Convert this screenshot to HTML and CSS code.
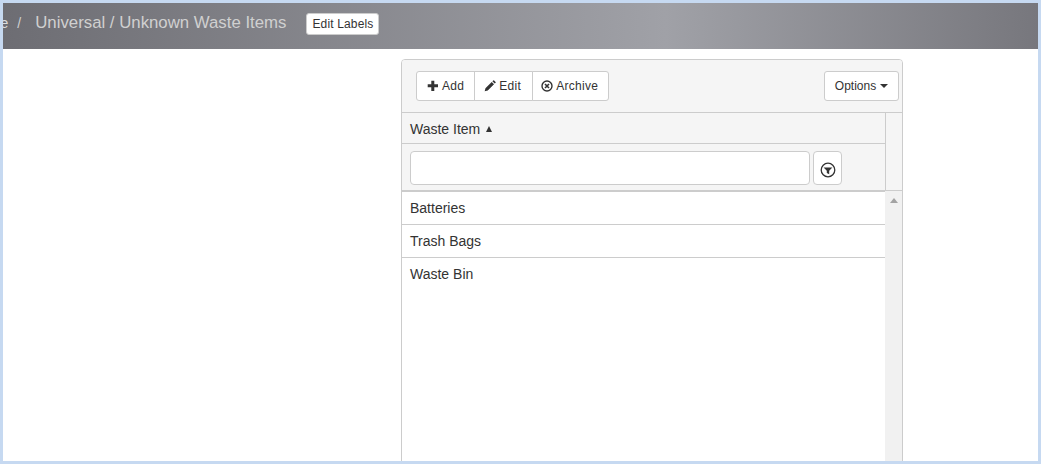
FILE: index.html
```html
<!DOCTYPE html>
<html lang="en">
<head>
<meta charset="utf-8">
<title>Universal / Unknown Waste Items</title>
<link rel="stylesheet" href="styles.css">
</head>
<body>
<div class="frame">
  <header class="topbar">
    <span class="crumb-home">Home</span>
    <span class="crumb-sep">/</span>
    <span class="crumb-title">Universal / Unknown Waste Items</span>
    <button class="edit-labels">Edit Labels</button>
  </header>
  <main class="content">
    <section class="panel">
      <div class="toolbar">
        <div class="btn-group">
          <button class="btn">
            <svg class="icon" width="12" height="12" viewBox="0 0 12 12"><path d="M4.3 0.7h3v3.6h3.7v3h-3.7v3.7h-3v-3.7h-3.6v-3h3.6z" fill="#333"/></svg>
            Add
          </button>
          <button class="btn btn-edit">
            <svg class="icon" width="12" height="12" viewBox="0 0 14 14"><path d="M0.8 13.2l0.9-3.6 7.3-7.3 2.7 2.7-7.3 7.3zM9.8 1.5l1-1a0.7 0.7 0 0 1 1 0l1.7 1.7a0.7 0.7 0 0 1 0 1l-1 1z" fill="#333"/></svg>
            Edit
          </button>
          <button class="btn btn-archive">
            <svg class="icon" width="12" height="12" viewBox="0 0 12 12"><circle cx="6" cy="6" r="5" fill="none" stroke="#333" stroke-width="1.4"/><path d="M4 4l4 4M8 4l-4 4" stroke="#333" stroke-width="1.6"/></svg>
            Archive
          </button>
        </div>
        <button class="btn options">Options <span class="caret"></span></button>
      </div>
      <div class="grid-head">
        <div class="head-main">
          <div class="head-title">Waste Item <span class="sort-up"></span></div>
          <div class="head-filter">
            <input class="filter-input" type="text" aria-label="Filter">
            <button class="filter-btn" aria-label="Filter options">
              <svg width="16" height="16" viewBox="0 0 16 16"><circle cx="8" cy="8" r="6.8" fill="none" stroke="#333" stroke-width="1.3"/><path d="M3.6 5.4h8.8l-3.2 3.4v3.4l-2.4-1.2v-2.2z" fill="#333"/></svg>
            </button>
          </div>
        </div>
        <div class="head-gutter"></div>
      </div>
      <div class="grid-body">
        <ul class="rows">
          <li class="row">Batteries</li>
          <li class="row">Trash Bags</li>
          <li class="row">Waste Bin</li>
        </ul>
        <div class="scrollbar"><span class="scroll-up"></span></div>
      </div>
    </section>
  </main>
</div>
</body>
</html>
```
FILE: styles.css
```css
* { box-sizing: border-box; }
html, body { margin: 0; padding: 0; height: 100%; overflow: hidden; background: #fff; }
body { font-family: "Liberation Sans", Arial, sans-serif; font-size: 14px; color: #333; }
button { font-family: inherit; }

.frame {
  width: 1041px;
  height: 464px;
  border: 3px solid #c6d9f1;
  overflow: hidden;
  background: #fff;
}

.topbar {
  height: 46px;
  display: flex;
  align-items: center;
  background: linear-gradient(90deg, #6d6d73 0%, #a0a1a7 64%, #77777d 100%);
  color: #d0d0d0;
  overflow: hidden;
  white-space: nowrap;
}
.crumb-home { font-size: 14px; margin-left: -32px; margin-bottom: 6px; color: #ddd; }
.crumb-sep { font-size: 14px; margin-left: 9px; margin-bottom: 6px; }
.crumb-title { font-size: 16.8px; margin-left: 14px; margin-bottom: 6px; }
.edit-labels {
  margin-left: 20px;
  margin-bottom: 4px;
  height: 22px;
  width: 73px;
  padding: 0;
  font-size: 12px;
  letter-spacing: 0.15px;
  color: #333;
  background: #fff;
  border: 1px solid #ccc;
  border-radius: 3px;
}

.content { padding: 10px 0 0 398px; }

.panel {
  width: 502px;
  height: 420px;
  border: 1px solid #ccc;
  border-radius: 4px 4px 0 0;
  background: #fff;
  overflow: hidden;
}

.toolbar {
  height: 53px;
  padding: 11px 3px 0 14px;
  display: flex;
  justify-content: space-between;
  align-items: flex-start;
  background: #f5f5f5;
  border-bottom: 1px solid #ccc;
}
.btn-group { display: flex; }
.btn {
  height: 30px;
  padding: 0 10px;
  font-size: 12px;
  color: #333;
  background: #fff;
  border: 1px solid #ccc;
  display: inline-flex;
  align-items: center;
  gap: 3px;
}
.btn-group .btn { margin-left: -1px; letter-spacing: 0.3px; }
.btn-group .btn:first-child { margin-left: 0; border-radius: 3px 0 0 3px; }
.btn-group .btn:last-child { border-radius: 0 3px 3px 0; }
.btn-group .btn-edit { padding: 0 11px 0 9px; }
.btn-group .btn-archive { padding: 0 10px 0 8px; }
.options { width: 75px; border-radius: 3px; justify-content: center; gap: 4px; }
.caret {
  width: 0;
  height: 0;
  border-left: 4px solid transparent;
  border-right: 4px solid transparent;
  border-top: 4px solid #333;
}

.grid-head {
  height: 78px;
  display: flex;
  background: #f5f5f5;
  border-bottom: 1px solid #ccc;
}
.head-main { width: 484px; border-right: 1px solid #ccc; }
.head-title {
  height: 31px;
  padding: 2px 8px 0;
  display: flex;
  align-items: center;
  border-bottom: 1px solid #ccc;
  white-space: pre;
}
.sort-up {
  width: 0;
  height: 0;
  margin-left: 2px;
  border-left: 3.5px solid transparent;
  border-right: 3.5px solid transparent;
  border-bottom: 6px solid #333;
}
.head-filter {
  padding: 7px 0 0 8px;
  display: flex;
  align-items: flex-start;
  gap: 3px;
}
.filter-input {
  width: 400px;
  height: 34px;
  border: 1px solid #ccc;
  border-radius: 4px;
  background: #fff;
  padding: 0 8px;
}
.filter-btn {
  width: 29px;
  height: 34px;
  padding: 3px 0 0;
  border: 1px solid #ccc;
  border-radius: 4px;
  background: #fff;
  display: flex;
  align-items: center;
  justify-content: center;
}
.head-gutter { flex: 1; }

.grid-body { display: flex; height: 270px; }
.rows {
  width: 483px;
  margin: 0;
  padding: 0;
  list-style: none;
  border-top: 1px solid #ccc;
}
.row {
  height: 33px;
  padding: 0 8px;
  display: flex;
  align-items: center;
  border-bottom: 1px solid #ccc;
}
.row:last-child { border-bottom-color: transparent; }
.scrollbar {
  flex: 1;
  background: #f1f1f1;
  display: flex;
  justify-content: center;
  align-items: flex-start;
  padding-top: 7px;
}
.scroll-up {
  width: 0;
  height: 0;
  border-left: 4px solid transparent;
  border-right: 4px solid transparent;
  border-bottom: 5px solid #a3a3a3;
}
```
